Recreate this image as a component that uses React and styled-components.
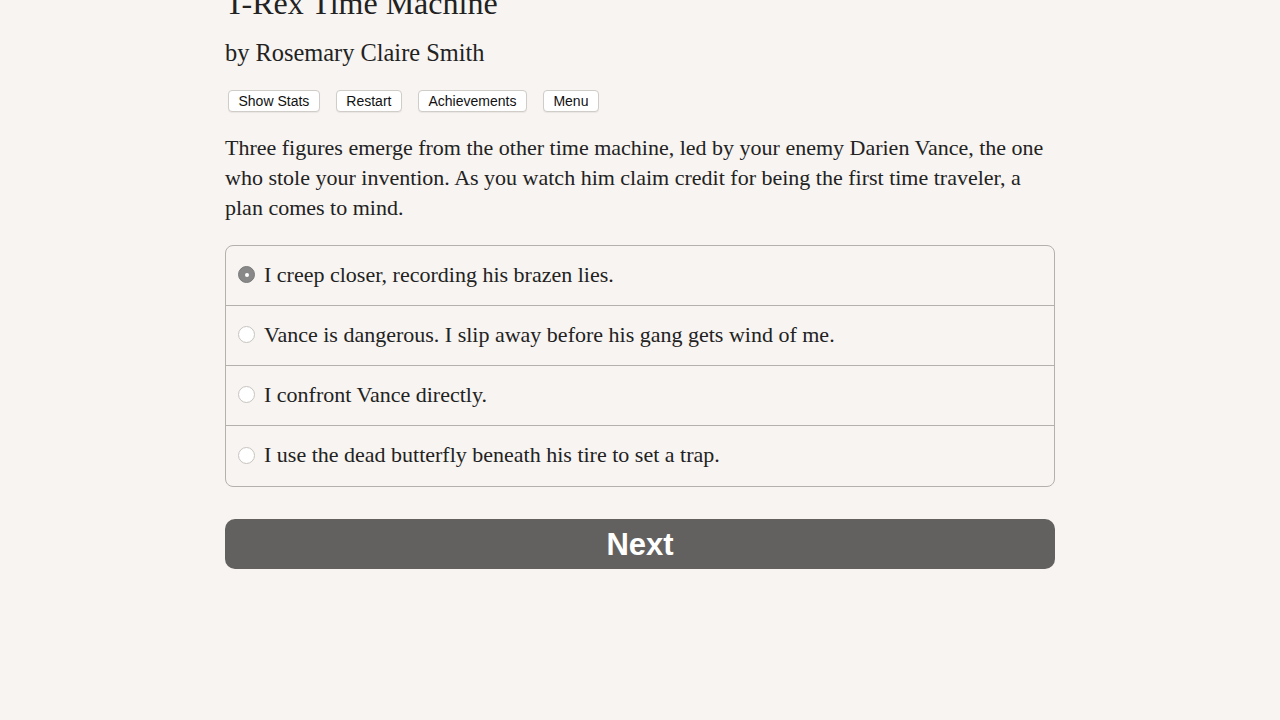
import React, { useState } from 'react';
import styled, { createGlobalStyle } from 'styled-components';

const GlobalStyle = createGlobalStyle`
  html, body {
    margin: 0;
    padding: 0;
    background-color: #f7f4f1;
  }
  body {
    font-family: "Liberation Serif", "Times New Roman", serif;
    color: #222;
    overflow: hidden;
  }
`;

const choices = [
  'I creep closer, recording his brazen lies.',
  'Vance is dangerous. I slip away before his gang gets wind of me.',
  'I confront Vance directly.',
  'I use the dead butterfly beneath his tire to set a trap.',
];

export default function App() {
  const [selected, setSelected] = useState(0);

  return (
    <>
      <GlobalStyle />
      <Page>
        <Title>T-Rex Time Machine</Title>
        <Author>by Rosemary Claire Smith</Author>
        <Toolbar>
          <ToolButton>Show Stats</ToolButton>
          <ToolButton>Restart</ToolButton>
          <ToolButton>Achievements</ToolButton>
          <ToolButton>Menu</ToolButton>
        </Toolbar>
        <Passage>
          Three figures emerge from the other time machine, led by your enemy Darien Vance, the one
          who stole your invention. As you watch him claim credit for being the first time traveler, a
          plan comes to mind.
        </Passage>
        <ChoiceList>
          {choices.map((c, i) => (
            <ChoiceRow key={i} onClick={() => setSelected(i)}>
              <Radio checked={selected === i} />
              <ChoiceText>{c}</ChoiceText>
            </ChoiceRow>
          ))}
        </ChoiceList>
        <NextButton>Next</NextButton>
      </Page>
    </>
  );
}

const Page = styled.div`
  width: 830px;
  margin: -15px auto 0;
  display: flex;
  flex-direction: column;
`;

const Title = styled.h1`
  font-size: 32px;
  font-weight: normal;
  line-height: 36px;
  margin: 0;
`;

const Author = styled.h2`
  font-size: 24.4px;
  font-weight: normal;
  line-height: 30px;
  margin: 17px 0 0;
`;

const Toolbar = styled.div`
  display: flex;
  gap: 16px;
  margin: 22px 0 0 3px;
`;

const ToolButton = styled.button`
  font-family: "Liberation Sans", Arial, sans-serif;
  font-size: 14px;
  color: #111;
  background: #fff;
  border: 1px solid #d0ccc8;
  border-radius: 4px;
  height: 22px;
  padding: 0 9.5px;
  box-shadow: 0 1px 1px rgba(0, 0, 0, 0.06);
`;

const Passage = styled.p`
  font-size: 22px;
  line-height: 30px;
  margin: 21px 0 0;
`;

const ChoiceList = styled.div`
  margin-top: 22px;
  border: 1px solid #b4b0ac;
  border-radius: 8px;
  overflow: hidden;
`;

const ChoiceRow = styled.div`
  display: flex;
  align-items: center;
  height: 60px;
  padding: 0 0 2px 12px;
  box-sizing: border-box;
  gap: 9px;
  border-bottom: 1px solid #b4b0ac;
  &:last-child {
    border-bottom: none;
  }
`;

const Radio = styled.span`
  width: 17px;
  height: 17px;
  border-radius: 50%;
  box-sizing: border-box;
  flex-shrink: 0;
  position: relative;
  background: ${(p) => (p.checked ? '#888' : '#fff')};
  border: 1px solid ${(p) => (p.checked ? '#7a7a7a' : '#c8c4c0')};
  &::after {
    content: '';
    display: ${(p) => (p.checked ? 'block' : 'none')};
    position: absolute;
    left: 5.5px;
    top: 5.5px;
    width: 4px;
    height: 4px;
    border-radius: 50%;
    background: #fff;
  }
`;

const ChoiceText = styled.span`
  font-size: 22px;
  line-height: 30px;
`;

const NextButton = styled.button`
  margin-top: 32px;
  height: 50px;
  border: none;
  border-radius: 10px;
  background: #636160;
  color: #fff;
  font-family: "Liberation Sans", Arial, sans-serif;
  font-weight: bold;
  font-size: 31px;
  padding-top: 2px;
`;
